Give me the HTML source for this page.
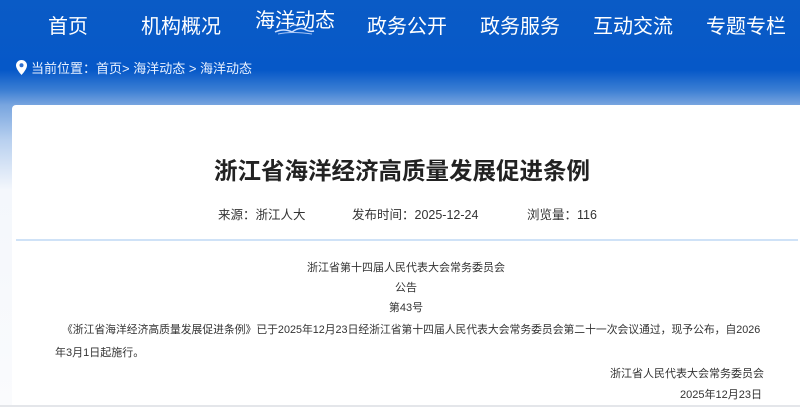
<!DOCTYPE html>
<html><head><meta charset="utf-8"><style>
*{margin:0;padding:0;box-sizing:border-box}
body{width:800px;height:407px;overflow:hidden;font-family:"Liberation Sans","Noto Sans CJK SC",sans-serif;background:linear-gradient(180deg,#0a5bc6 0px,#0658c8 70px,#3b7ed3 90px,#78a5df 105px,#b8d0ef 140px,#f4f7fc 190px,#fafbfd 407px);position:relative}
.nav{position:absolute;top:0;left:0;width:800px;height:45px}
.nav span{position:absolute;top:10px;color:#fff;font-size:20px;transform:translateX(-50%);white-space:nowrap}
.bc{position:absolute;top:58px;left:16px;color:#eaf2ff;font-size:13px;display:flex;align-items:center;gap:4px}
.card{position:absolute;left:12px;top:105px;width:800px;height:300px;background:#fff;border-radius:4px 0 0 0}
.title{position:absolute;top:47px;left:-4px;width:788px;text-align:center;font-size:23.5px;font-weight:bold;color:#222}
.m{position:absolute;top:99px;font-size:12.5px;color:#333;white-space:nowrap}
.line{position:absolute;top:134px;left:4px;width:782px;height:2px;background:#cfe2f7}
.t{position:absolute;font-size:11px;color:#333;white-space:nowrap}
.c{left:0;width:788px;text-align:center}
.bot{position:absolute;left:0;top:405px;width:800px;height:2px;background:#e4e6ea}
</style></head><body>
<div class="nav">
<span style="left:68px">首页</span>
<span style="left:181px">机构概况</span>
<span style="left:295px;top:4px">海洋动态</span>
<span style="left:407px">政务公开</span>
<span style="left:520px">政务服务</span>
<span style="left:633px">互动交流</span>
<span style="left:746px">专题专栏</span>
</div>
<svg style="position:absolute;left:272px;top:22px" width="45" height="14" viewBox="0 0 45 14"><path d="M3 10 Q12 6 20 10 Q28 4 34 8 Q38 10 42 9" stroke="#cfe0ff" stroke-width="1.5" fill="none"/><path d="M6 12 Q20 9 40 12" stroke="#a9c6f5" stroke-width="1" fill="none"/><path d="M18 5 Q22 1 26 4" stroke="#dfeaff" stroke-width="1.2" fill="none"/></svg>
<div class="bc"><svg width="11" height="15" viewBox="0 0 11 15"><path d="M5.5 0C2.5 0 0 2.4 0 5.4 0 9.3 5.5 15 5.5 15S11 9.3 11 5.4C11 2.4 8.5 0 5.5 0z" fill="#fff"/><circle cx="5.5" cy="5.3" r="2" fill="#2e6fcf"/></svg><span>当前位置：首页&gt; 海洋动态 &gt; 海洋动态</span></div>
<div class="card">
<div class="title">浙江省海洋经济高质量发展促进条例</div>
<div class="m" style="left:206px">来源：浙江人大</div>
<div class="m" style="left:340px">发布时间：2025-12-24</div>
<div class="m" style="left:515px">浏览量：116</div>
<div class="line"></div>
<div class="t c" style="top:154px">浙江省第十四届人民代表大会常务委员会</div>
<div class="t c" style="top:174px">公告</div>
<div class="t c" style="top:194px">第43号</div>
<div class="t" style="top:216px;left:50px;font-size:10.8px">《浙江省海洋经济高质量发展促进条例》已于2025年12月23日经浙江省第十四届人民代表大会常务委员会第二十一次会议通过，现予公布，自2026</div>
<div class="t" style="top:239px;left:43px">年3月1日起施行。</div>
<div class="t" style="top:260px;left:598px">浙江省人民代表大会常务委员会</div>
<div class="t" style="top:281px;left:668px">2025年12月23日</div>
</div>
<div class="bot"></div>
</body></html>
